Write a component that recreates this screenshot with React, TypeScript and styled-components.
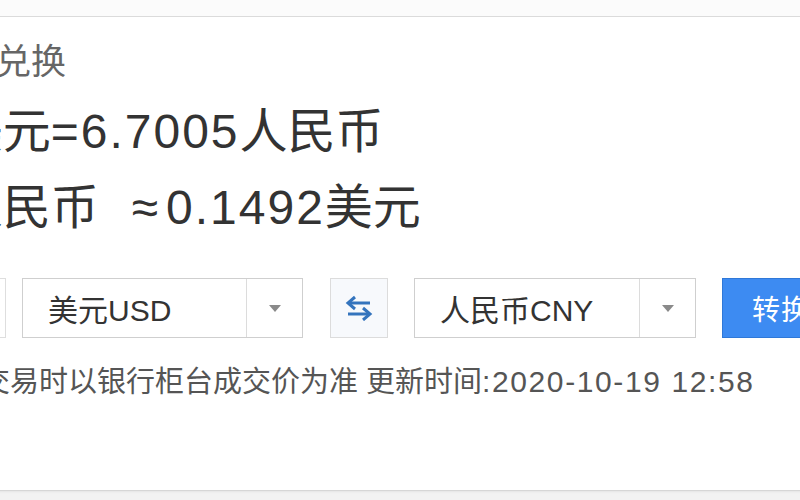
import React from 'react';
import styled, { createGlobalStyle } from 'styled-components';

const GlobalStyle = createGlobalStyle`
  html, body {
    margin: 0;
    padding: 0;
    background: #f2f2f2;
    overflow: hidden;
  }
  * {
    box-sizing: border-box;
  }
`;

const FONT = `"Liberation Sans", "Noto Sans CJK SC", sans-serif`;

const Page = styled.div`
  width: 800px;
  height: 500px;
  overflow: hidden;
  display: flex;
  flex-direction: column;
  background: #f2f2f2;
  font-family: ${FONT};
`;

const TopStrip = styled.div`
  height: 17px;
  flex: none;
  background: #fbfbfb;
  border-bottom: 1px solid #dcdcdc;
`;

// the converter card runs past both edges of the window
const Card = styled.div`
  flex: none;
  height: 474px;
  width: 980px;
  margin-left: -72px;
  padding-top: 25px;
  background: #fff;
  border-bottom: 1px solid #d6d6d6;
  box-shadow: 0 1px 2px rgba(0, 0, 0, 0.06);
  display: flex;
  flex-direction: column;
`;

const Title = styled.div`
  font-size: 35px;
  line-height: 40px;
  margin-left: -2px;
  color: #666;
  white-space: nowrap;
`;

const Rate = styled.div<{ $first?: boolean }>`
  font-size: 48px;
  line-height: 76px;
  height: 76px;
  color: #333;
  white-space: nowrap;
  margin-top: ${({ $first }) => ($first ? '12px' : '0')};
`;

const Num = styled.span<{ $spacing?: number }>`
  letter-spacing: ${({ $spacing }) => $spacing ?? 0}px;
`;

const Approx = styled.span`
  margin: 0 8px 0 33px;
`;

const Controls = styled.div`
  display: flex;
  align-items: center;
  margin-top: 32px;
  height: 60px;
`;

const AmountInput = styled.div`
  width: 78px;
  height: 60px;
  border: 1px solid #dedede;
  background: #fff;
  margin-right: 16px;
`;

const Select = styled.div<{ $width: number }>`
  width: ${({ $width }) => $width}px;
  height: 60px;
  border: 1px solid #cfcfcf;
  display: flex;
  align-items: stretch;
  background: #fff;
`;

const SelectLabel = styled.div`
  flex: 1;
  display: flex;
  align-items: center;
  padding-left: 25px;
  font-size: 30px;
  color: #333;
  white-space: nowrap;
`;

const ArrowCell = styled.div`
  width: 56px;
  border-left: 1px solid #dcdcdc;
  display: flex;
  align-items: center;
  justify-content: center;
`;

const Caret = styled.span`
  width: 0;
  height: 0;
  border-left: 6px solid transparent;
  border-right: 6px solid transparent;
  border-top: 7px solid #8a8a8a;
`;

const SwapButton = styled.div`
  width: 58px;
  height: 60px;
  margin: 0 26px 0 27px;
  border: 1px solid #dcdcdc;
  background: #f7f9fc;
  display: flex;
  align-items: center;
  justify-content: center;
`;

const ConvertButton = styled.div`
  width: 140px;
  height: 60px;
  margin-left: 26px;
  background: #3d8bf2;
  border: 1px solid #2f78d8;
  color: #fff;
  font-size: 28px;
  display: flex;
  align-items: center;
  padding-left: 29px;
  letter-spacing: 1px;
`;

const Footer = styled.div`
  margin-top: 26px;
  margin-left: -92px;
  font-size: 29px;
  line-height: 36px;
  color: #555;
  white-space: nowrap;
`;

const Stamp = styled.span`
  font-size: 30px;
  letter-spacing: 1.6px;
`;

const SwapIcon = () => (
  <svg width="30" height="26" viewBox="0 0 30 26" fill="none">
    <path d="M4 8 H26" stroke="#3474bd" strokeWidth="3" />
    <path d="M11 2 L4 8 L11 14" stroke="#3474bd" strokeWidth="3" fill="none" />
    <path d="M4 19 H26" stroke="#3474bd" strokeWidth="3" />
    <path d="M19 13 L26 19 L19 25" stroke="#3474bd" strokeWidth="3" fill="none" />
  </svg>
);

const CurrencySelect: React.FC<{ label: string; width: number }> = ({ label, width }) => (
  <Select $width={width}>
    <SelectLabel>{label}</SelectLabel>
    <ArrowCell>
      <Caret />
    </ArrowCell>
  </Select>
);

export default function App() {
  return (
    <>
      <GlobalStyle />
      <Page>
        <TopStrip />
        <Card>
          <Title>汇率兑换</Title>
          <Rate $first>
            1美元<Num $spacing={2}>=6.7005</Num>人民币
          </Rate>
          <Rate>
            1人民币<Approx>≈</Approx>
            <Num $spacing={2}>0.1492</Num>美元
          </Rate>
          <Controls>
            <AmountInput />
            <CurrencySelect label="美元USD" width={281} />
            <SwapButton>
              <SwapIcon />
            </SwapButton>
            <CurrencySelect label="人民币CNY" width={282} />
            <ConvertButton>转换</ConvertButton>
          </Controls>
          <Footer>
            仅供参考，交易时以银行柜台成交价为准 更新时间<Stamp>:2020-10-19 12:58</Stamp>
          </Footer>
        </Card>
      </Page>
    </>
  );
}
